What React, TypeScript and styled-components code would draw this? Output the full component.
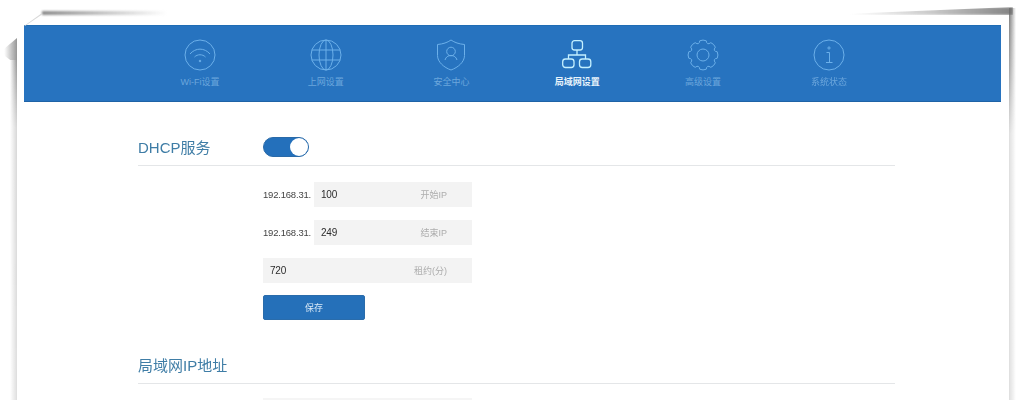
import React from 'react'
import styled, { createGlobalStyle } from 'styled-components'

const GlobalStyle = createGlobalStyle`
   html, body {
      margin: 0;
      padding: 0;
      background: #fff;
   }
   body {
      font-family: "Liberation Sans", "Noto Sans CJK SC", sans-serif;
   }
`

const WifiIcon = () => (
   <svg width="32" height="32" viewBox="0 0 32 32" fill="none" stroke="currentColor" strokeWidth="1">
      <circle cx="16" cy="16" r="15" />
      <path d="M6 15c5.500-6.500 14.500-6.500 20 0" />
      <path d="M10.500 18c3-3 8-3 11 0" />
      <circle cx="16" cy="22" r="0.8" fill="currentColor" />
   </svg>
)

const GlobeIcon = () => (
   <svg width="32" height="32" viewBox="0 0 32 32" fill="none" stroke="currentColor" strokeWidth="1">
      <circle cx="16" cy="16" r="15" />
      <ellipse cx="16" cy="16" rx="7" ry="15" />
      <path d="M16 1v30M1.900 11h28.200M1.900 21h28.200" />
   </svg>
)

const ShieldIcon = () => (
   <svg width="32" height="32" viewBox="0 0 32 32" fill="none" stroke="currentColor" strokeWidth="1">
      <path d="M16 1c3.500 2.500 8 4 13.500 4.500v11c0 6.500-6.500 12-13.500 14.500-7-2.500-13.500-8-13.500-14.500v-11C8 5 12.500 3.500 16 1z" />
      <circle cx="16" cy="12.500" r="4.300" />
      <path d="M10 21c.8-3 3-4.500 6-4.500s5.200 1.500 6 4.500" />
   </svg>
)

const NetworkIcon = () => (
   <svg width="32" height="32" viewBox="0 0 32 32" fill="none" stroke="currentColor" strokeWidth="1.3">
      <rect x="11" y="1.700" width="10.500" height="9.300" rx="2.500" />
      <rect x="1.700" y="20" width="11.300" height="8.500" rx="2.800" />
      <rect x="18.500" y="20" width="11.300" height="8.500" rx="2.800" />
      <path d="M16 11v5M7.500 20v-4h17v4" />
   </svg>
)

const polar = (angle: number, radius: number) =>
   `${(16 + radius * Math.cos(angle)).toFixed(2)} ${(16 + radius * Math.sin(angle)).toFixed(2)}`

// eight rounded lobes, worked out from angles
const gearPath = () => {
   let d = `M${polar(-0.22, 14.6)}`
   for (let i = 0; i < 8; i++) {
      const mid = (i * Math.PI) / 4
      d += `Q${polar(mid, 15.6)} ${polar(mid + 0.22, 14.6)}`
      d += `Q${polar(mid + Math.PI / 8, 10.2)} ${polar(mid + Math.PI / 4 - 0.22, 14.6)}`
   }
   return `${d}Z`
}

const GearIcon = () => (
   <svg width="32" height="32" viewBox="0 0 32 32" fill="none" stroke="currentColor" strokeWidth="1" strokeLinejoin="round">
      <circle cx="16" cy="16" r="6" />
      <path d={gearPath()} />
   </svg>
)

const InfoIcon = () => (
   <svg width="32" height="32" viewBox="0 0 32 32" fill="none" stroke="currentColor" strokeWidth="1">
      <circle cx="16" cy="16" r="15" />
      <circle cx="16" cy="9" r="1.100" />
      <path d="M13.500 13.500H16.500V23M13 23.500h6.500" />
   </svg>
)

const navItems = [
   { label: 'Wi-Fi设置', icon: <WifiIcon /> },
   { label: '上网设置', icon: <GlobeIcon /> },
   { label: '安全中心', icon: <ShieldIcon /> },
   { label: '局域网设置', icon: <NetworkIcon />, active: true },
   { label: '高级设置', icon: <GearIcon /> },
   { label: '系统状态', icon: <InfoIcon /> },
]

const App = () => {
   return (
      <Page>
         <GlobalStyle />
         <Sheet>
            <Nav>
               {navItems.map(item => (
                  <NavItem key={item.label} $active={item.active}>
                     {item.icon}
                     <NavLabel $active={item.active}>{item.label}</NavLabel>
                  </NavItem>
               ))}
            </Nav>
            <Content>
               <SectionHead>
                  <SectionTitle>DHCP服务</SectionTitle>
                  <Switch>
                     <Knob />
                  </Switch>
               </SectionHead>
               <Form>
                  <Row>
                     <Prefix>192.168.31.</Prefix>
                     <Field>
                        <Value>100</Value>
                        <Hint>开始IP</Hint>
                     </Field>
                  </Row>
                  <Row>
                     <Prefix>192.168.31.</Prefix>
                     <Field>
                        <Value>249</Value>
                        <Hint>结束IP</Hint>
                     </Field>
                  </Row>
                  <Row>
                     <Field>
                        <Value>720</Value>
                        <Hint>租约(分)</Hint>
                     </Field>
                  </Row>
                  <SaveButton>保存</SaveButton>
               </Form>
               <SectionHead $second>
                  <SectionTitle>局域网IP地址</SectionTitle>
               </SectionHead>
               <NextField />
            </Content>
         </Sheet>
         <TopLeftShadow />
         <TopRightShadow />
         <RightShadow />
         <LeftShadow />
         <LeftWedge />
         <FoldLine />
      </Page>
   )
}

const Page = styled.div`
   position: relative;
   width: 1027px;
   height: 400px;
   overflow: hidden;
   background: #fff;
`

const Sheet = styled.div`
   box-sizing: border-box;
   width: 992px;
   height: 400px;
   margin-left: 17px;
   padding: 25px 8px 0 7px;
   filter: blur(0.4px);
`

const Nav = styled.nav`
   display: flex;
   height: 77px;
   box-sizing: border-box;
   padding: 13px 0 0 113px;
   background: #2773bf;
   border-top: 1px solid #1f6cb4;
   border-bottom: 1px solid #1f63a6;
`

const NavItem = styled.div<{ $active?: boolean }>`
   display: flex;
   flex-direction: column;
   align-items: center;
   width: 125.8px;
   color: ${p => (p.$active ? '#c4f0ff' : '#6cb0ea')};
`

const NavLabel = styled.span<{ $active?: boolean }>`
   margin-top: 5px;
   font-size: 9px;
   line-height: 12px;
   color: ${p => (p.$active ? '#e8f3fb' : '#6ba6dc')};
   font-weight: ${p => (p.$active ? 700 : 400)};
`

const Content = styled.div`
   padding: 0 106px 0 114px;
`

const SectionHead = styled.div<{ $second?: boolean }>`
   display: flex;
   align-items: center;
   box-sizing: border-box;
   padding-top: ${p => (p.$second ? '3px' : '25px')};
   margin-top: ${p => (p.$second ? '22px' : '0')};
   height: ${p => (p.$second ? '42px' : '64px')};
   border-bottom: 1px solid #e4e6e8;
`

const SectionTitle = styled.h2`
   width: 125px;
   margin: 0;
   font-size: 15px;
   font-weight: 400;
   color: #3f7da6;
`

const Switch = styled.div`
   display: flex;
   justify-content: flex-end;
   box-sizing: border-box;
   width: 46px;
   height: 20px;
   margin-top: 2px;
   background: #2470bb;
   border: 1px solid #2a6aa8;
   border-radius: 10px;
`

const Knob = styled.div`
   width: 18px;
   height: 18px;
   background: #fff;
   border-radius: 50%;
`

const Form = styled.div`
   display: flex;
   flex-direction: column;
   gap: 13px;
   width: 209px;
   margin-left: 125px;
   padding-top: 16px;
`

const Row = styled.div`
   display: flex;
   align-items: center;
   height: 25px;
`

const Prefix = styled.span`
   width: 51px;
   font-size: 9.5px;
   letter-spacing: -0.2px;
   color: #444;
`

const Field = styled.div`
   flex: 1;
   display: flex;
   align-items: center;
   justify-content: space-between;
   height: 25px;
   padding: 0 25px 0 7px;
   background: #f3f3f3;
`

const Value = styled.span`
   font-size: 10px;
   letter-spacing: -0.2px;
   color: #2c2c2c;
`

const Hint = styled.span`
   font-size: 9px;
   color: #adadad;
`

const SaveButton = styled.button`
   width: 102px;
   height: 25px;
   margin-top: -1px;
   padding: 0;
   border: 1px solid #2a6cab;
   border-radius: 2px;
   background: #2570b9;
   color: #d8e8f6;
   font-family: inherit;
   font-size: 9px;
`

const NextField = styled.div`
   width: 209px;
   height: 10px;
   margin: 14px 0 0 125px;
   background: #f5f5f5;
`

const TopLeftShadow = styled.div`
   position: absolute;
   left: 42px;
   top: 11px;
   width: 125px;
   height: 4px;
   background: linear-gradient(90deg, rgba(120, 120, 120, 0.85), rgba(150, 150, 150, 0.6) 45%, transparent);
   filter: blur(1px);
`

const TopRightShadow = styled.div`
   position: absolute;
   left: 850px;
   top: 7px;
   width: 163px;
   height: 8px;
   background: linear-gradient(90deg, transparent, rgba(150, 150, 150, 0.5) 50%, rgba(110, 110, 110, 0.85));
   clip-path: polygon(0 85%, 100% 0, 100% 100%, 0 100%);
   filter: blur(0.8px);
`

const RightShadow = styled.div`
   position: absolute;
   left: 1009px;
   top: 8px;
   width: 7px;
   height: 392px;
   background: linear-gradient(90deg, rgba(110, 110, 110, 0.9), transparent);
   mask-image: linear-gradient(180deg, #000, rgba(0, 0, 0, 0.7) 15%, rgba(0, 0, 0, 0.25) 32%, rgba(0, 0, 0, 0.25));
`

const LeftShadow = styled.div`
   position: absolute;
   left: 10px;
   top: 60px;
   width: 7px;
   height: 340px;
   background: linear-gradient(90deg, transparent, rgba(110, 110, 110, 0.9));
   mask-image: linear-gradient(180deg, rgba(0, 0, 0, 0.8), rgba(0, 0, 0, 0.3) 20%, rgba(0, 0, 0, 0.25));
`

const LeftWedge = styled.div`
   position: absolute;
   left: 0;
   top: 38px;
   width: 17px;
   height: 22px;
   background: linear-gradient(90deg, transparent 25%, rgba(110, 110, 110, 0.72));
   clip-path: polygon(100% 0, 100% 100%, 60% 100%, 0 65%);
`

const FoldLine = styled.div`
   position: absolute;
   left: 24px;
   top: 13px;
   width: 18px;
   height: 13px;
   background: #d8d8d8;
   clip-path: polygon(100% 0, 100% 12%, 6% 100%, 0 100%);
`

export default App
